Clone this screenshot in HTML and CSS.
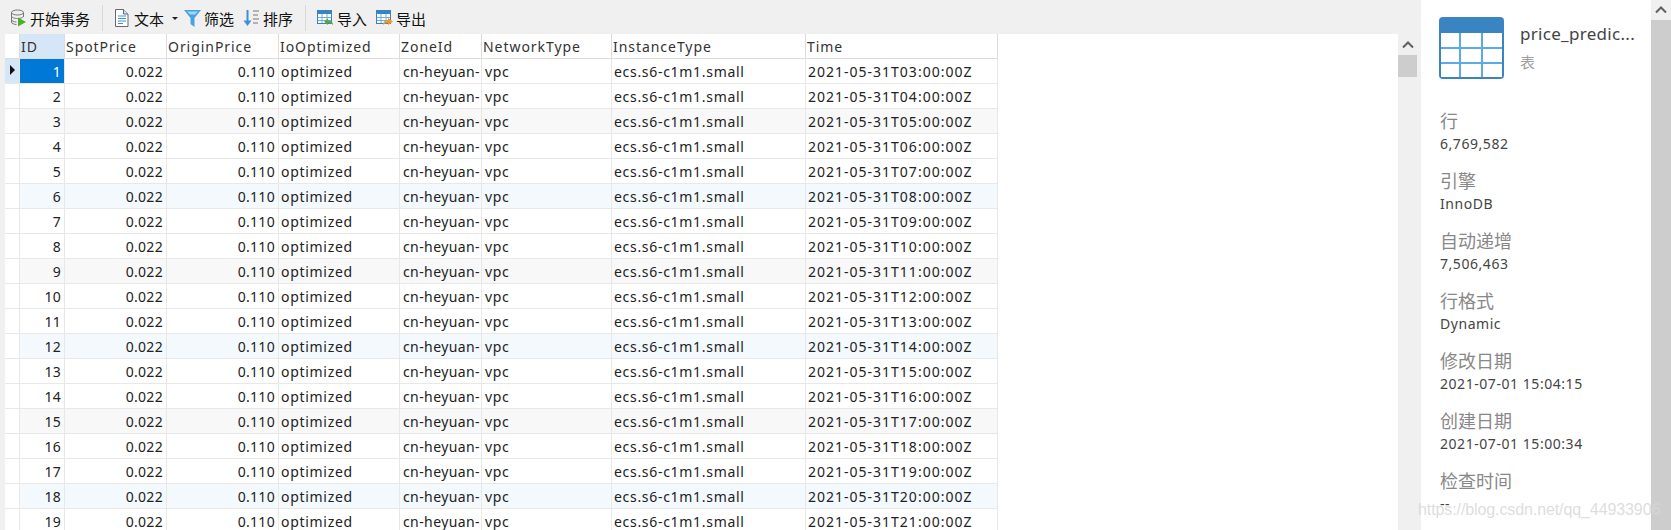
FILE: index.html
```html
<!DOCTYPE html>
<html lang="zh">
<head>
    <meta charset="UTF-8">
    <title>price_prediction</title>
    <link rel="stylesheet" href="styles.css">
</head>
<body>
    <div class="main">
        <div class="toolbar">
            <div class="tool">
                <svg class="ico" width="20" height="20" viewBox="0 0 20 20"><ellipse cx="8.500" cy="4.500" rx="6" ry="2.500" fill="#eee" stroke="#777"/><path d="M2.500 4.500V14c0 1.400 2.500 2.500 5 2.500M14.500 4.500V9M2.500 8c0 1.400 2.700 2.500 6 2.500s6-1.100 6-2.500M2.500 11.500c0 1.300 2 2.300 5 2.500" fill="none" stroke="#777"/><path d="M9 9.500l8 4.500-8 4.500z" fill="#4cae2c"/></svg>
                <span>开始事务</span>
            </div>
            <div class="sep"></div>
            <div class="tool doc">
                <svg class="ico" width="20" height="20" viewBox="0 0 20 20"><path d="M2.500 1.500h8l4.500 4.500v12.500h-12.500z" fill="#fff" stroke="#667"/><path d="M10.500 1.500v4.500h4.500" fill="#dde" stroke="#667"/><path d="M5 8h8M5 10.500h8M5 13h8M5 15.500h5" stroke="#3a8fd8"/></svg>
                <span>文本</span>
                <span class="caret"></span>
            </div>
            <div class="tool">
                <svg class="ico" width="20" height="20" viewBox="0 0 20 20"><path d="M1 2h17l-6.500 8v9l-4-3v-6z" fill="#45a3e5"/><path d="M4 3.500h11l-3 3h-5z" fill="#a6d6f5"/></svg>
                <span>筛选</span>
            </div>
            <div class="tool">
                <svg class="ico" width="20" height="20" viewBox="0 0 20 20"><path d="M5.500 2v14" stroke="#3d8fdc" stroke-width="2"/><path d="M1.500 12.500h8l-4 5.500z" fill="#3d8fdc"/><path d="M11 3h6M11 7h5M11 11h6M11 15h5" stroke="#777"/></svg>
                <span>排序</span>
            </div>
            <div class="sep"></div>
            <div class="tool">
                <svg class="ico" width="20" height="20" viewBox="0 0 20 20"><rect x="1.500" y="2.500" width="14" height="13" fill="#fff" stroke="#3a82c0"/><rect x="1" y="2" width="15" height="4" fill="#3a82c0"/><path d="M6 6v9M11 6v9M2 9.500h13M2 12.500h13" stroke="#6aaee0"/><path d="M17 17c0-3-2-4.500-5-4.500v-2l-4 3.300 4 3.200v-2c2 0 3.500.5 5 2z" fill="#56a63a"/></svg>
                <span>导入</span>
            </div>
            <div class="tool">
                <svg class="ico" width="20" height="20" viewBox="0 0 20 20"><rect x="1.500" y="2.500" width="14" height="13" fill="#fff" stroke="#3a82c0"/><rect x="1" y="2" width="15" height="4" fill="#3a82c0"/><path d="M6 6v9M11 6v9M2 9.500h13M2 12.500h13" stroke="#6aaee0"/><path d="M8 17c0-3 2-5 5-5v-2l5 3.500-5 3.500v-2c-2 0-3.500.5-5 2z" fill="#f0962a"/></svg>
                <span>导出</span>
            </div>
        </div>
        <div class="grid-wrap">
            <div class="grid-area">
                <table class="grid">
                    <colgroup>
                        <col class="c-mark"><col class="c-id"><col class="c-spot"><col class="c-origin"><col class="c-io"><col class="c-zone"><col class="c-net"><col class="c-inst"><col class="c-time">
                    </colgroup>
                    <thead>
                        <tr>
                            <th></th><th class="active">ID</th><th>SpotPrice</th><th>OriginPrice</th><th>IoOptimized</th><th>ZoneId</th><th>NetworkType</th><th>InstanceType</th><th>Time</th>
                        </tr>
                    </thead>
                    <tbody id="rows"></tbody>
                </table>
            </div>
            <div class="vscroll">
                <div class="arrow"><svg width="12" height="8" viewBox="0 0 12 8"><path d="M1 6.500l5-5 5 5" fill="none" stroke="#606060" stroke-width="2"/></svg></div>
                <div class="thumb"></div>
            </div>
        </div>
    </div>

    <div class="panel">
        <div class="panel-head">
            <svg class="table-ico" width="65" height="62" viewBox="0 0 65 62">
                <rect width="65" height="62" rx="4" fill="#3a84c1"/>
                <rect x="2" y="16" width="61" height="44" fill="#5aabe6"/>
                <g fill="#fff">
                    <rect x="2" y="16" width="18" height="14"/><rect x="22" y="16" width="20" height="14"/><rect x="44" y="16" width="19" height="14"/>
                    <rect x="2" y="32" width="18" height="13"/><rect x="22" y="32" width="20" height="13"/><rect x="44" y="32" width="19" height="13"/>
                    <rect x="2" y="47" width="18" height="13"/><rect x="22" y="47" width="20" height="13"/><rect x="44" y="47" width="19" height="13"/>
                </g>
            </svg>
            <div>
                <div class="obj-name">price_predic...</div>
                <div class="obj-type">表</div>
            </div>
        </div>
        <dl class="props">
            <dt>行</dt><dd>6,769,582</dd>
            <dt>引擎</dt><dd>InnoDB</dd>
            <dt>自动递增</dt><dd>7,506,463</dd>
            <dt>行格式</dt><dd>Dynamic</dd>
            <dt>修改日期</dt><dd>2021-07-01 15:04:15</dd>
            <dt>创建日期</dt><dd>2021-07-01 15:00:34</dd>
            <dt>检查时间</dt><dd>--</dd>
        </dl>
    </div>
    <div class="vscroll side">
        <div class="arrow top"><svg width="12" height="8" viewBox="0 0 12 8"><path d="M1 6.500l5-5 5 5" fill="none" stroke="#606060" stroke-width="2"/></svg></div>
        <div class="thumb long"></div>
    </div>

    <div class="watermark">https://blog.csdn.net/qq_44933906</div>

    <script>
        const rows = document.getElementById('rows');
        for (let i = 1; i <= 19; i++) {
            const hour = String(i + 2).padStart(2, '0');
            const tr = document.createElement('tr');
            if (i % 6 === 0) tr.className = 'blue';
            else if (i % 6 === 3) tr.className = 'stripe';
            const mark = i === 1 ? '<span class="pointer"></span>' : '';
            tr.innerHTML = `<td class="mark${i === 1 ? ' on' : ''}">${mark}</td>
                <td class="num${i === 1 ? ' sel' : ''}">${i}</td>
                <td class="num">0.022</td><td class="num">0.110</td>
                <td>optimized</td><td class="zone">cn-heyuan-</td><td class="net">vpc</td>
                <td>ecs.s6-c1m1.small</td><td class="time">2021-05-31T${hour}:00:00Z</td>`;
            rows.appendChild(tr);
        }
    </script>
</body>
</html>
```

FILE: styles.css
```css
html, body {
    height: 100%;
}

body {
    margin: 0;
    height: 530px;
    display: flex;
    overflow: hidden;
    position: relative;
    background-color: #f0f0f0;
    font-family: "Noto Sans", "Noto Sans CJK SC", sans-serif;
    font-size: 14px;
    color: #222;
}

.main {
    width: 1417px;
    flex: none;
    display: flex;
    flex-direction: column;
    min-width: 0;
}

/* Toolbar */
.toolbar {
    box-sizing: border-box;
    height: 34px;
    flex: none;
    display: flex;
    align-items: center;
    padding: 2px 0 0 9px;
    font-family: "Noto Sans CJK SC", sans-serif;
    font-size: 15px;
    color: #111;
}

.tool {
    display: flex;
    align-items: center;
    gap: 1px;
    margin-right: 8px;
}

.tool.doc {
    margin-right: 5px;
}

.ico {
    flex: none;
}

.caret {
    width: 0;
    height: 0;
    margin-left: 7px;
    border-left: 3px solid transparent;
    border-right: 3px solid transparent;
    border-top: 3px solid #222;
}

.sep {
    width: 1px;
    height: 26px;
    margin: 0 10px 0 4px;
    background-color: #d8d8d8;
}

/* Data grid */
.grid-wrap {
    flex: 1;
    display: flex;
    min-height: 0;
    padding-left: 5px;
}

.grid-area {
    flex: 1;
    background-color: #fff;
    overflow: hidden;
}

.grid {
    border-collapse: separate;
    border-spacing: 0;
    table-layout: fixed;
    width: 993px;
}

.c-mark { width: 15px; }
.c-id { width: 45px; }
.c-spot { width: 102px; }
.c-origin { width: 112px; }
.c-io { width: 121px; }
.c-zone { width: 82px; }
.c-net { width: 130px; }
.c-inst { width: 194px; }
.c-time { width: 192px; }

.grid th, .grid td {
    box-sizing: border-box;
    height: 25px;
    padding: 2px 3px 0 2px;
    border-right: 1px solid #e8e8e8;
    border-bottom: 1px solid #e8e8e8;
    font-weight: normal;
    text-align: left;
    white-space: nowrap;
    overflow: hidden;
    line-height: 22px;
    letter-spacing: 0.7px;
}

.grid th {
    padding-left: 1px;
    border-bottom-color: #dcdcdc;
    border-right-color: #dcdcdc;
    color: #333;
    letter-spacing: 0.95px;
}

.grid th.active {
    background-color: #d5e7f6;
}

.grid td.num {
    text-align: right;
    letter-spacing: 0.3px;
}

.grid td.zone {
    padding-left: 3px;
    padding-right: 0;
    letter-spacing: 0.4px;
}

.grid td.net {
    padding-left: 3px;
}

.grid td.time {
    letter-spacing: 1px;
}

.grid td.mark {
    position: relative;
    padding: 0;
}

.grid td.on {
    background-color: #d5e7f6;
}

.grid td.sel {
    background-color: #0078d7;
    color: #fff;
}

.pointer {
    position: absolute;
    left: 5px;
    top: 6px;
    border-top: 5px solid transparent;
    border-bottom: 5px solid transparent;
    border-left: 5px solid #111;
}

.stripe td {
    background-color: #f8f8f8;
}

.blue td {
    background-color: #f3f9fd;
}

.stripe td.mark, .blue td.mark {
    background-color: #fff;
}

/* Scrollbars */
.vscroll {
    width: 19px;
    flex: none;
    background-color: #f0f0f0;
}

.arrow {
    height: 21px;
    display: flex;
    align-items: center;
    justify-content: center;
}

.thumb {
    height: 22px;
    background-color: #cdcdcd;
}

.vscroll.side {
    width: 20px;
}

.arrow.top {
    height: 20px;
}

.thumb.long {
    height: 510px;
}

/* Object panel */
.panel {
    width: 230px;
    flex: none;
    margin-left: 4px;
    box-sizing: border-box;
    padding: 17px 0 0 18px;
    background-color: #fff;
    overflow: hidden;
}

.panel-head {
    display: flex;
    gap: 16px;
    margin-bottom: 30px;
}

.table-ico {
    flex: none;
}

.obj-name {
    margin-top: 5px;
    font-size: 17px;
    line-height: 23px;
    letter-spacing: 0.3px;
    color: #444;
}

.obj-type {
    margin-top: 7px;
    line-height: 20px;
    font-size: 15px;
    color: #a0a0a0;
}

.props {
    margin: 0;
    padding-left: 1px;
}

.props dt {
    font-size: 18px;
    line-height: 24px;
    color: #888;
}

.props dd {
    margin: 0 0 14px;
    font-size: 14px;
    line-height: 22px;
    letter-spacing: 0.55px;
    color: #444;
}

.watermark {
    position: absolute;
    left: 1418px;
    top: 501px;
    font-family: "Liberation Sans", sans-serif;
    font-size: 16px;
    letter-spacing: -0.1px;
    color: rgba(215, 215, 215, 0.85);
    white-space: nowrap;
}
```
